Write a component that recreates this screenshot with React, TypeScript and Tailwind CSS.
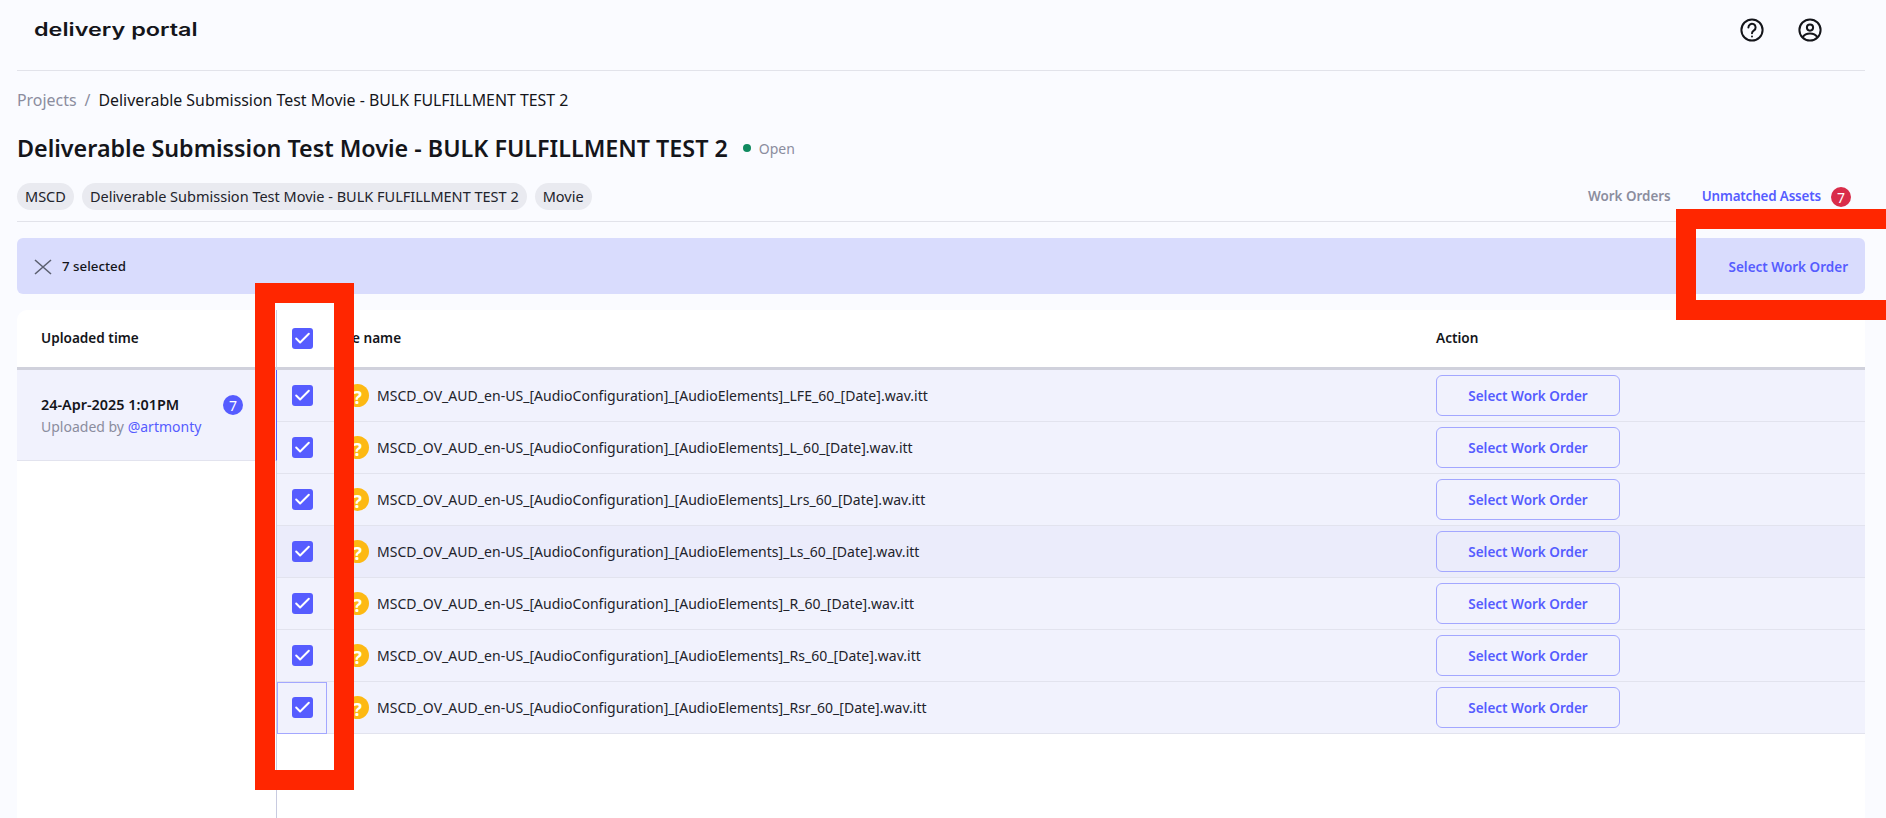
import { Check } from "lucide-react";

const suffixes = ["LFE", "L", "Lrs", "Ls", "R", "Rs", "Rsr"];
const font = { fontFamily: '"Noto Sans", sans-serif' };

function Checkbox() {
  return (
    <div className="grid size-[21px] place-items-center rounded-[3px] bg-[#565cff]">
      <Check className="size-[19px] text-white" strokeWidth={2.5} />
    </div>
  );
}

function Chip({ label }: { label: string }) {
  return (
    <div className="flex h-[27px] items-center rounded-full bg-[#e9eaf0] px-[8px] text-[14.5px] text-[#22232b]">
      {label}
    </div>
  );
}

function FileRow({ suffix, index }: { suffix: string; index: number }) {
  const last = index === suffixes.length - 1;
  return (
    <div
      className={
        index === 3
          ? "flex h-[52px] items-center border-b border-[#e2e3ee] bg-[#ebecfb]"
          : "flex h-[52px] items-center border-b border-[#e2e3ee] bg-[#f1f2fd]"
      }
    >
      <div
        className={
          last
            ? "grid h-[52px] w-[50px] shrink-0 place-items-center border border-[#a3a7ff]"
            : "grid h-[52px] w-[50px] shrink-0 place-items-center"
        }
      >
        <Checkbox />
      </div>
      <div className="ml-[19px] grid size-[23px] shrink-0 place-items-center rounded-full bg-[#fdb913] text-[18px] font-bold text-white">
        ?
      </div>
      <div className="ml-[8px] flex-1 truncate text-[14px] tracking-[0.03px] text-[#22232b]">
        MSCD_OV_AUD_en-US_[AudioConfiguration]_[AudioElements]_{suffix}_60_[Date].wav.itt
      </div>
      <div className="w-[429px] shrink-0">
        <button className="h-[41px] w-[184px] rounded-[6px] border border-[#a3a7ff] pt-[1px] text-[13.5px] font-semibold text-[#565cff]">
          Select Work Order
        </button>
      </div>
    </div>
  );
}

export default function App() {
  return (
    <div className="relative h-[818px] overflow-hidden bg-[#fafbff] pl-[17px] pr-[21px]" style={font}>
      <header className="flex h-[71px] items-center justify-between border-b border-[#e2e3ea] pb-[11px] pl-[17px] pr-[43px]">
        <div className="origin-left scale-x-[1.3] text-[18px] font-semibold text-[#14151a]" style={{ fontFamily: "Inter, sans-serif" }}>
          delivery portal
        </div>
        <div className="flex items-center gap-[34px] text-[#14151a]">
          <svg viewBox="0 0 24 24" className="size-[24px]" fill="none" stroke="currentColor" strokeWidth="2" strokeLinecap="round">
            <circle cx="12" cy="12" r="10.6" />
            <path d="M8.4 9.4a3.6 3.6 0 1 1 5.6 3c-1.3.9-2 1.5-2 2.9" />
            <path d="M12 18.4v.1" />
          </svg>
          <svg viewBox="0 0 24 24" className="size-[24px]" fill="none" stroke="currentColor" strokeWidth="2" strokeLinecap="round">
            <circle cx="12" cy="12" r="10.6" />
            <circle cx="12" cy="9.6" r="3.1" />
            <path d="M4.8 19c1.6-2.6 4-3.6 7.2-3.6s5.6 1 7.2 3.6" />
          </svg>
        </div>
      </header>

      <nav className="mt-[18px] flex h-[24px] items-center text-[15.9px]">
        <span className="text-[#8b8d9e]">Projects</span>
        <span className="mx-[8px] text-[#8b8d9e]">/</span>
        <span className="text-[#14151a]">Deliverable Submission Test Movie - BULK FULFILLMENT TEST 2</span>
      </nav>

      <div className="mt-[19px] flex h-[32px] items-center">
        <h1 className="text-[23.3px] font-semibold text-[#14151a]">Deliverable Submission Test Movie - BULK FULFILLMENT TEST 2</h1>
        <span className="ml-[15px] size-[8px] rounded-full bg-[#0f8a5f]" />
        <span className="ml-[8px] text-[14px] text-[#8b8d9e]">Open</span>
      </div>

      <div className="mt-[19px] flex justify-between border-b border-[#e2e3ea] pb-[11px]">
        <div className="flex gap-[8px]">
          <Chip label="MSCD" />
          <Chip label="Deliverable Submission Test Movie - BULK FULFILLMENT TEST 2" />
          <Chip label="Movie" />
        </div>
        <div className="flex items-center pr-[14px] text-[13.4px] font-semibold">
          <span className="text-[#8b8d9e]">Work Orders</span>
          <span className="ml-[31px] tracking-[-0.15px] text-[#565cff]">Unmatched Assets</span>
          <span className="ml-[10px] grid size-[20px] place-items-center rounded-full bg-[#d92d4a] text-[14px] font-normal text-white">7</span>
        </div>
      </div>

      <div className="mt-[16px] flex h-[56px] items-center justify-between rounded-[6px] bg-[#d9dcfd] pl-[17px] pr-[17px] pt-[2px]">
        <div className="flex items-center gap-[10px]">
          <svg viewBox="0 0 18 16" className="h-[16px] w-[18px] text-[#5c6070]" fill="none" stroke="currentColor" strokeWidth="1.6">
            <path d="M1 1l16 14M17 1L1 15" />
          </svg>
          <span className="text-[13.3px] font-medium text-[#14151a]">7 selected</span>
        </div>
        <span className="text-[13.5px] font-semibold text-[#565cff]">Select Work Order</span>
      </div>

      <div className="mt-[16px] flex h-[600px] overflow-hidden rounded-t-[10px] bg-white">
        <div className="w-[260px] shrink-0 border-r border-[#c8cbe0]">
          <div className="flex h-[60px] items-center border-b-[3px] border-[#d0d1dc] pl-[24px] text-[13.6px] font-semibold text-[#14151a]">
            Uploaded time
          </div>
          <div className="-mr-px flex h-[91px] items-start justify-between border-r border-b border-r-[#565cff] border-b-[#e2e3ee] bg-[#f1f2fd] pl-[24px] pr-[33px] pt-[25px]">
            <div>
              <div className="text-[14.4px] font-semibold leading-[20px] text-[#14151a]">24-Apr-2025 1:01PM</div>
              <div className="mt-[2px] text-[14px] leading-[20px] text-[#8b8d9e]">
                Uploaded by <span className="text-[#565cff]">@artmonty</span>
              </div>
            </div>
            <span className="grid size-[20px] place-items-center rounded-full bg-[#565cff] text-[14px] text-white">7</span>
          </div>
        </div>

        <div className="flex-1">
          <div className="flex h-[60px] items-center border-b-[3px] border-[#d0d1dc] text-[13.6px] font-semibold text-[#14151a]">
            <div className="grid w-[50px] shrink-0 place-items-center">
              <Checkbox />
            </div>
            <div className="ml-[10px] flex-1">File name</div>
            <div className="w-[429px] shrink-0">Action</div>
          </div>
          {suffixes.map((suffix, i) => (
            <FileRow key={suffix} suffix={suffix} index={i} />
          ))}
        </div>
      </div>

      {/* annotation boxes drawn over the screenshot */}
      <div className="absolute left-[255px] top-[283px] h-[507px] w-[99px] border-[20px] border-[#ff2600]" />
      <div className="absolute left-[1676px] top-[209px] h-[111px] w-[230px] border-[20px] border-[#ff2600]" />
    </div>
  );
}
